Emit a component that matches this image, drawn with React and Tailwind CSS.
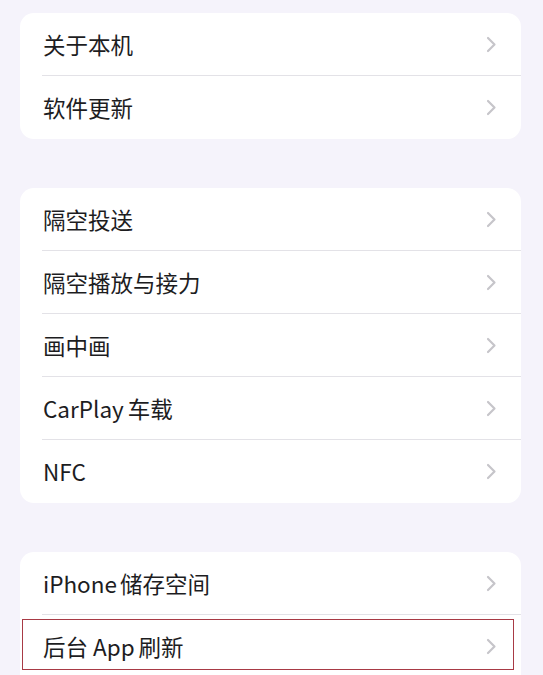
const Chevron = () => (
  <svg width="11" height="17" viewBox="0 0 11 17" fill="none" className="shrink-0">
    <path d="M2 2l6.5 6.5L2 15" stroke="#c6c5ca" strokeWidth="2.2" strokeLinecap="round" strokeLinejoin="round" />
  </svg>
)

const Row = ({ children, last, highlight }) => (
  <div className="relative h-[63px] flex items-center pl-[23px] pr-[24px]">
    {highlight && <div className="absolute left-[2px] right-[7px] top-[4px] h-[51px] border-[1.5px] border-[#a83a45] pointer-events-none" />}
    <span className="flex-1 flex items-center text-[22.5px] text-[#1d1d1f] leading-none">{children}</span>
    <Chevron />
    {!last && <div className="absolute left-[22px] right-0 bottom-0 h-px bg-[#e3e2e7]" />}
  </div>
)

const Group = ({ items, className = "" }) => (
  <div className={"shrink-0 bg-white rounded-[14px] overflow-hidden " + className}>
    {items.map((label, i) => (
      <Row key={i} last={i === items.length - 1}>{label}</Row>
    ))}
  </div>
)

export default function App() {
  return (
    <div
      className="w-[543px] h-[675px] overflow-hidden bg-[#f5f3fb] pl-[20px] pr-[22px] pt-[13px] flex flex-col"
      style={{ fontFamily: '"Noto Sans CJK SC", "Noto Sans", sans-serif' }}
    >
      <Group items={["关于本机", "软件更新"]} />
      <Group
        className="mt-[49px]"
        items={[
          "隔空投送",
          "隔空播放与接力",
          "画中画",
          <>CarPlay<span className="ml-[4px]">车载</span></>,
          "NFC",
        ]}
      />
      <div className="shrink-0 mt-[49px] bg-white rounded-t-[14px]">
        <Row>iPhone<span className="ml-[3px]">储存空间</span></Row>
        <Row highlight last>后台<span className="ml-[5px]">App</span><span className="ml-[4px]">刷新</span></Row>
      </div>
    </div>
  )
}
